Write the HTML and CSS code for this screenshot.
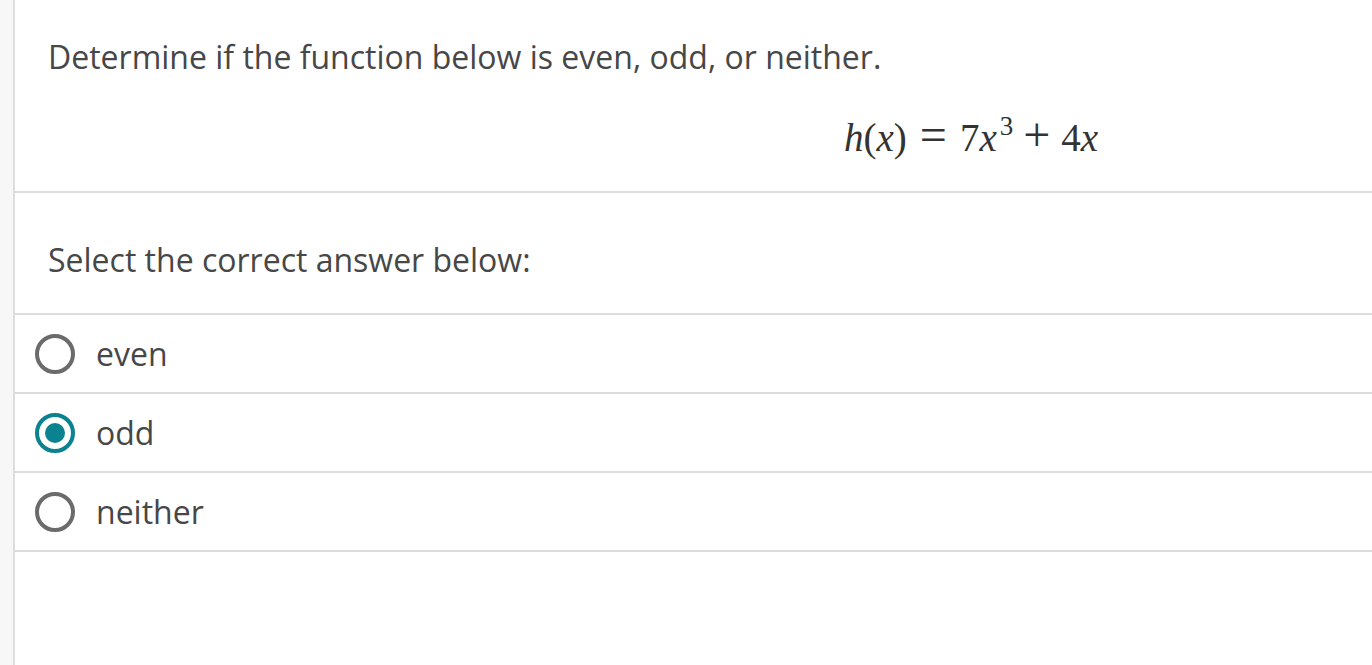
FILE: index.html
```html
<!DOCTYPE html>
<html lang="en">
  <head>
    <meta charset="UTF-8" />
    <meta name="viewport" content="width=device-width, initial-scale=1.0" />
    <title>Question</title>
    <link rel="stylesheet" href="styles.css">
  </head>
  <body>
    <div class="page">
      <div class="gutter"></div>
      <div class="main">
        <div class="question">
          <p class="prompt">Determine if the function below is even, odd, or neither.</p>
          <div class="math">
            <i>h</i>(<i>x</i>)<span class="op eq">=</span>7<i>x</i><sup>3</sup><span class="op plus">+</span>4<i>x</i>
          </div>
        </div>
        <div class="instruction">Select the correct answer below:</div>
        <div class="options">
          <label class="option">
            <span class="radio"></span>
            <span class="label">even</span>
          </label>
          <label class="option">
            <span class="radio checked"></span>
            <span class="label">odd</span>
          </label>
          <label class="option">
            <span class="radio"></span>
            <span class="label">neither</span>
          </label>
        </div>
      </div>
    </div>
  </body>
</html>
```

FILE: styles.css
```css
body {
  margin: 0;
  font-family: "Open Sans", "Noto Sans", sans-serif;
  color: #474747;
  background: #fff;
}
.page {
  display: flex;
  min-height: 665px;
}
.gutter {
  width: 13px;
  background: #f7f7f7;
  border-right: 2px solid #dddddd;
}
.main {
  flex: 1;
}
.question {
  height: 193px;
  box-sizing: border-box;
  padding: 35px 0 0 33px;
  border-bottom: 2px solid #dddddd;
}
.prompt {
  margin: 0;
  font-size: 32px;
  line-height: 44px;
}
.math {
  margin-top: 37px;
  padding-left: 796px;
  font-family: "Liberation Serif", "Times New Roman", serif;
  font-size: 39px;
  line-height: 44px;
  color: #333;
  white-space: nowrap;
}
.math .op {
  display: inline-block;
  font-size: 48px;
  line-height: 0;
}
.math .eq {
  margin: 0 13px 0 13px;
}
.math .plus {
  margin: 0 11px 0 10px;
}
.math sup {
  font-size: 27px;
  line-height: 0;
  vertical-align: 16px;
  margin-left: 3px;
}
.instruction {
  height: 122px;
  box-sizing: border-box;
  padding: 45px 0 0 33px;
  font-size: 32px;
  line-height: 44px;
  border-bottom: 2px solid #dddddd;
}
.option {
  height: 79px;
  box-sizing: border-box;
  display: flex;
  align-items: center;
  gap: 21px;
  padding-left: 20px;
  border-bottom: 2px solid #dddddd;
  font-size: 32px;
}
.radio {
  width: 32px;
  height: 32px;
  border: 4px solid #6b6b6b;
  border-radius: 50%;
  display: flex;
  align-items: center;
  justify-content: center;
}
.radio.checked {
  border-color: #0b8290;
}
.radio.checked::after {
  content: "";
  width: 20px;
  height: 20px;
  border-radius: 50%;
  background: #0b8290;
}
```
